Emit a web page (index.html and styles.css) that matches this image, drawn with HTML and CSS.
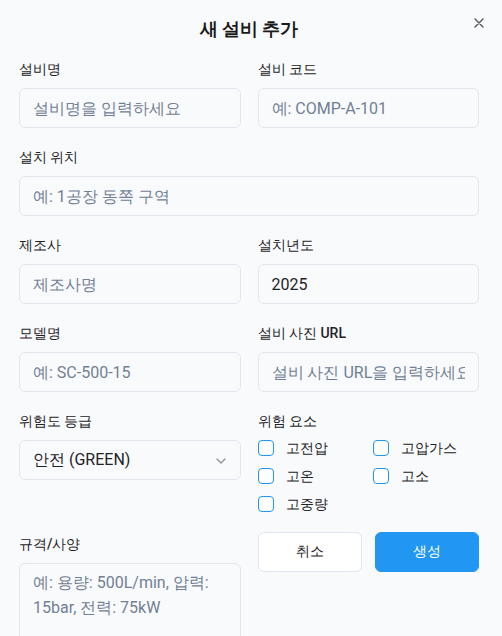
FILE: index.html
```html
<!DOCTYPE html>
<html>
<head>
<meta charset="utf-8">
<title>새 설비 추가</title>
<link rel="stylesheet" href="styles.css">
</head>
<body>
<div class="modal">
  <div class="header">
    <h2 class="title">새 설비 추가</h2>
    <button class="close" aria-label="닫기">
      <svg width="10" height="10" viewBox="0 0 10 10"><path d="M1 1L9 9M9 1L1 9" stroke="#555" stroke-width="1.4" stroke-linecap="round"/></svg>
    </button>
  </div>
  <form class="form">
    <div class="field">
      <label class="label">설비명</label>
      <input class="input" placeholder="설비명을 입력하세요">
    </div>
    <div class="field">
      <label class="label">설비 코드</label>
      <input class="input" placeholder="예: COMP-A-101">
    </div>
    <div class="field full">
      <label class="label">설치 위치</label>
      <input class="input" placeholder="예: 1공장 동쪽 구역">
    </div>
    <div class="field">
      <label class="label">제조사</label>
      <input class="input" placeholder="제조사명">
    </div>
    <div class="field">
      <label class="label">설치년도</label>
      <input class="input" value="2025">
    </div>
    <div class="field">
      <label class="label">모델명</label>
      <input class="input" placeholder="예: SC-500-15">
    </div>
    <div class="field">
      <label class="label">설비 사진 URL</label>
      <input class="input" placeholder="설비 사진 URL을 입력하세요">
    </div>
    <div class="field">
      <label class="label">위험도 등급</label>
      <div class="select">
        <span>안전 (GREEN)</span>
        <svg class="chev" width="10" height="6" viewBox="0 0 10 6"><path d="M1 1L5 5L9 1" fill="none" stroke="#8a8f98" stroke-width="1.3" stroke-linecap="round" stroke-linejoin="round"/></svg>
      </div>
    </div>
    <div class="field">
      <label class="label">위험 요소</label>
      <div class="checks">
        <label class="check"><input type="checkbox" class="box"><span>고전압</span></label>
        <label class="check"><input type="checkbox" class="box"><span>고압가스</span></label>
        <label class="check"><input type="checkbox" class="box"><span>고온</span></label>
        <label class="check"><input type="checkbox" class="box"><span>고소</span></label>
        <label class="check"><input type="checkbox" class="box"><span>고중량</span></label>
      </div>
    </div>
    <div class="field">
      <label class="label spec-label">규격/사양</label>
      <textarea class="textarea" placeholder="예: 용량: 500L/min, 압력: 15bar, 전력: 75kW"></textarea>
    </div>
    <div class="actions">
      <button type="button" class="btn cancel">취소</button>
      <button type="button" class="btn primary">생성</button>
    </div>
  </form>
</div>
</body>
</html>
```
FILE: styles.css
```css
* { box-sizing: border-box; }
html, body {
  margin: 0;
  padding: 0;
  background: #f9fafb;
  height: 100%;
  overflow: hidden;
}
body {
  font-family: Roboto, sans-serif;
  color: #1f2328;
}
.modal {
  padding: 0 23px 0 19px;
}
.header {
  position: relative;
  padding-top: 16px;
  margin-bottom: 16px;
}
.title {
  margin: 0;
  text-align: center;
  font-size: 18px;
  line-height: 26px;
  font-weight: 700;
  color: #1a1a1a;
}
.close {
  position: absolute;
  right: -6px;
  top: 17px;
  width: 12px;
  height: 12px;
  padding: 0;
  border: 0;
  background: none;
  display: flex;
  align-items: center;
  justify-content: center;
}
.form {
  display: grid;
  grid-template-columns: 1fr 1fr;
  column-gap: 17px;
  row-gap: 18px;
}
.field {
  display: flex;
  flex-direction: column;
  min-width: 0;
}
.full { grid-column: 1 / -1; }
.label {
  font-size: 14px;
  line-height: 22px;
  font-weight: 500;
  margin-bottom: 8px;
  color: #1f2328;
}
.input, .select, .textarea {
  width: 100%;
  border: 1px solid #e1e6ef;
  border-radius: 6px;
  background: #f9fafb;
  font-family: Roboto, sans-serif;
  font-size: 16px;
  color: #1f2328;
}
.input {
  height: 40px;
  padding: 0 13px;
  outline: none;
}
.input::placeholder, .textarea::placeholder {
  color: #718096;
  opacity: 1;
}
.select {
  height: 40px;
  padding: 0 14px 0 13px;
  display: flex;
  align-items: center;
  justify-content: space-between;
}
.chev { margin-top: 1px; }
.checks {
  display: grid;
  grid-template-columns: 106px 1fr;
  column-gap: 9px;
  row-gap: 10px;
}
.check {
  display: flex;
  align-items: center;
  height: 18px;
  font-size: 14px;
  color: #1f2328;
}
.box {
  appearance: none;
  -webkit-appearance: none;
  margin: 0 12px 0 0;
  width: 16px;
  height: 16px;
  border: 1.5px solid #2196f3;
  border-radius: 4px;
  background: #fff;
  flex: none;
  position: relative;
  top: -1px;
}
.spec-label { margin-top: 1px; }
.textarea {
  height: 90px;
  padding: 6px 13px;
  line-height: 25px;
  resize: none;
  outline: none;
}
.actions {
  display: flex;
  gap: 13px;
  align-items: flex-start;
}
.btn {
  flex: 1;
  height: 40px;
  border-radius: 6px;
  font-family: Roboto, sans-serif;
  font-size: 14px;
  cursor: pointer;
}
.cancel {
  background: #fff;
  border: 1px solid #e1e6ef;
  color: #1f2328;
}
.primary {
  background: #2196f3;
  border: 1px solid #2196f3;
  color: #fff;
}
```
